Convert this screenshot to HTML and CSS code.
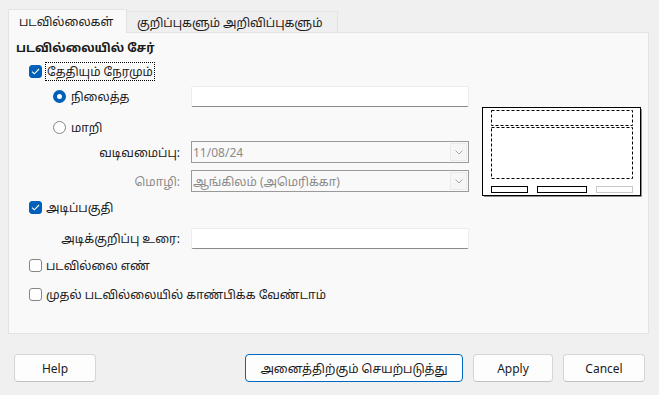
FILE: index.html
```html
<!DOCTYPE html>
<html lang="ta">
<head>
  <meta charset="UTF-8">
  <meta name="viewport" content="width=device-width, initial-scale=1.0">
  <title>தலைப்பும் அடிப்பகுதியும்</title>
  <link rel="stylesheet" href="styles.css">
</head>

<body>
  <div class="dialog">
    <div class="tabs">
      <div class="tab tab-active">படவில்லைகள்</div>
      <div class="tab">குறிப்புகளும் அறிவிப்புகளும்</div>
    </div>

    <div class="panel">
      <div class="form">
        <div class="title">படவில்லையில் சேர்</div>

        <div class="row row-datetime">
          <span class="check checked">
            <svg width="9" height="7" viewBox="0 0 9 7"><path d="M1 3.6 L3.3 5.8 L8 1" fill="none" stroke="#fff" stroke-width="1.1"/></svg>
          </span>
          <span class="focus">தேதியும் நேரமும்</span>
        </div>

        <div class="row row-fixed">
          <div class="lead radio-lead"><span class="radio on"></span>நிலைத்த</div>
          <div class="entry"></div>
        </div>

        <div class="row row-var">
          <div class="lead radio-lead"><span class="radio"></span>மாறி</div>
        </div>

        <div class="row row-format">
          <div class="lead label">வடிவமைப்பு:</div>
          <div class="combo">
            <span class="combo-text">11/08/24</span>
            <span class="combo-btn">
              <svg width="8" height="5" viewBox="0 0 8 5"><path d="M0.5 0.5 L4 4 L7.5 0.5" fill="none" stroke="#a8a8a8" stroke-width="1"/></svg>
            </span>
          </div>
        </div>

        <div class="row row-lang">
          <div class="lead label label-disabled">மொழி:</div>
          <div class="combo">
            <span class="combo-text">ஆங்கிலம் (அமெரிக்கா)</span>
            <span class="combo-btn">
              <svg width="8" height="5" viewBox="0 0 8 5"><path d="M0.5 0.5 L4 4 L7.5 0.5" fill="none" stroke="#a8a8a8" stroke-width="1"/></svg>
            </span>
          </div>
        </div>

        <div class="row row-footer">
          <span class="check checked">
            <svg width="9" height="7" viewBox="0 0 9 7"><path d="M1 3.6 L3.3 5.8 L8 1" fill="none" stroke="#fff" stroke-width="1.1"/></svg>
          </span>
          <span>அடிப்பகுதி</span>
        </div>

        <div class="row row-foottext">
          <div class="lead label">அடிக்குறிப்பு உரை:</div>
          <div class="entry"></div>
        </div>

        <div class="row row-number">
          <span class="check"></span>
          <span>படவில்லை எண்</span>
        </div>

        <div class="row row-first">
          <span class="check"></span>
          <span>முதல் படவில்லையில் காண்பிக்க வேண்டாம்</span>
        </div>
      </div>

      <div class="preview">
        <svg width="162" height="91" viewBox="0 0 162 91">
          <path d="M159.5 2 V89.5 H2" fill="none" stroke="#8c8c8c" stroke-width="1"/>
          <rect x="0.5" y="0.5" width="158" height="88" fill="#fff" stroke="#000"/>
          <rect x="9.5" y="3.5" width="141" height="15" fill="none" stroke="#000" stroke-dasharray="3 2"/>
          <rect x="9.5" y="20.5" width="141" height="51" fill="none" stroke="#000" stroke-dasharray="3 2"/>
          <rect x="9.5" y="79.5" width="36" height="6" fill="none" stroke="#000"/>
          <rect x="55.5" y="79.5" width="49" height="6" fill="none" stroke="#000"/>
          <rect x="114.5" y="79.5" width="36" height="6" fill="none" stroke="#c8c8c8"/>
        </svg>
      </div>
    </div>

    <div class="buttons">
      <button class="btn btn-help">Help</button>
      <span class="spacer"></span>
      <button class="btn btn-default">அனைத்திற்கும் செயற்படுத்து</button>
      <button class="btn btn-apply">Apply</button>
      <button class="btn btn-cancel">Cancel</button>
    </div>
  </div>
</body>
</html>
```

FILE: styles.css
```css
body {
  margin: 0;
  width: 659px;
  height: 395px;
  background-color: #f0f0f0;
  font-family: "Noto Sans", "Noto Sans Tamil", "Lohit Tamil", sans-serif;
  font-size: 12px;
  color: #1a1a1a;
  overflow: hidden;
}

.dialog {
  display: flex;
  flex-direction: column;
  padding-top: 9px;
}

/* tabs */
.tabs {
  display: flex;
  align-items: flex-end;
  margin-left: 8px;
  height: 23px;
}

.tab {
  box-sizing: border-box;
  height: 21px;
  padding: 0 10px;
  display: flex;
  align-items: center;
  border: 1px solid #e3e3e3;
  border-bottom: none;
  background-color: #efefef;
}

.tab-active {
  width: 119px;
  height: 23px;
  background-color: #f9f9f9;
  position: relative;
  z-index: 1;
  margin-bottom: -1px;
  height: 24px;
}

.tab + .tab {
  width: 211px;
  border-left: none;
}

/* panel */
.panel {
  box-sizing: border-box;
  margin-left: 8px;
  width: 641px;
  height: 302px;
  border: 1px solid #e3e3e3;
  background-color: #f9f9f9;
  padding: 6px 0 0 7px;
  display: flex;
}

.form {
  display: flex;
  flex-direction: column;
  width: 453px;
}

.title {
  height: 18px;
  line-height: 18px;
  font-weight: bold;
}

.row {
  display: flex;
  align-items: center;
  height: 20px;
}

.row-datetime { margin-top: 4px; padding-left: 13px; }
.row-fixed { margin-top: 5px; height: 21px; }
.row-var { margin-top: 10px; }
.row-format { margin-top: 4px; height: 22px; }
.row-lang { margin-top: 7px; height: 22px; }
.row-footer { margin-top: 5px; padding-left: 13px; }
.row-foottext { margin-top: 11px; }
.row-number { margin-top: 7px; padding-left: 13px; }
.row-first { margin-top: 9px; padding-left: 13px; }

.lead {
  width: 164px;
  flex: none;
  margin-right: 11px;
}

.radio-lead {
  display: flex;
  align-items: center;
  padding-left: 37px;
  box-sizing: border-box;
}

.label {
  text-align: right;
}

.label-disabled {
  color: #8a8a8a;
}

/* controls */
.check {
  box-sizing: border-box;
  width: 13px;
  height: 13px;
  border: 1px solid #858585;
  border-radius: 3px;
  background-color: #fff;
  margin-right: 4px;
  display: flex;
  align-items: center;
  justify-content: center;
  flex: none;
}

.check.checked {
  background-color: #005fb8;
  border-color: #005fb8;
}

.focus {
  outline: 1px dotted #000;
  padding: 0 1px;
  line-height: 17px;
}

.radio {
  box-sizing: border-box;
  width: 13px;
  height: 13px;
  border: 1px solid #858585;
  border-radius: 50%;
  background-color: #fff;
  margin-right: 5px;
  flex: none;
}

.radio.on {
  border: 4px solid #005fb8;
}

.entry {
  box-sizing: border-box;
  width: 278px;
  height: 21px;
  background-color: #fff;
  border: 1px solid #ececec;
  border-bottom-color: #8a8a8a;
  border-radius: 2px;
}

.combo {
  box-sizing: border-box;
  width: 278px;
  height: 22px;
  border: 1px solid #9a9a9a;
  background-color: #f9f9f9;
  display: flex;
  align-items: center;
  color: #8a8a8a;
}

.combo-text {
  flex: 1;
  padding-left: 1px;
}

.combo-btn {
  box-sizing: border-box;
  width: 17px;
  height: 18px;
  margin-right: 1px;
  border: 1px solid #eaeaea;
  background-color: #f6f6f6;
  display: flex;
  align-items: center;
  justify-content: center;
}

/* preview */
.preview {
  margin-left: 13px;
  margin-top: 68px;
}

/* buttons */
.buttons {
  display: flex;
  margin-top: 20px;
  padding: 0 14px;
  gap: 10px;
}

.spacer {
  flex: 1;
}

.btn {
  box-sizing: border-box;
  height: 28px;
  width: 82px;
  font-family: inherit;
  font-size: 12px;
  color: #1a1a1a;
  background-color: #fdfdfd;
  border: 1px solid #d5d5d5;
  border-bottom-color: #c2c2c2;
  border-radius: 4px;
  padding: 0;
}

.btn-default {
  width: 218px;
  border: 1px solid #0067c0;
}

.btn-apply {
  width: 80px;
}
```
